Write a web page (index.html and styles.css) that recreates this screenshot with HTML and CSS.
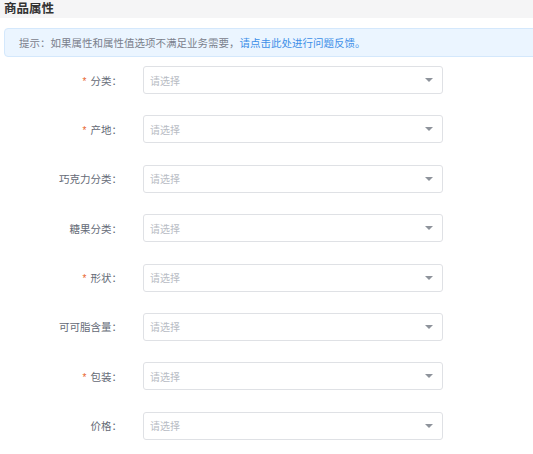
FILE: index.html
```html
<!DOCTYPE html>
<html lang="zh">
<head>
<meta charset="utf-8">
<link rel="stylesheet" href="styles.css">
</head>
<body>
<div class="page">
  <div class="title">商品属性</div>
  <div class="alert">提示：如果属性和属性值选项不满足业务需要，<a class="link">请点击此处进行问题反馈。</a></div>
  <div class="form">
    <div class="row"><label class="label"><span class="req">*</span>分类：</label><div class="select"><span class="ph">请选择</span><span class="arrow"></span></div></div>
    <div class="row"><label class="label"><span class="req">*</span>产地：</label><div class="select"><span class="ph">请选择</span><span class="arrow"></span></div></div>
    <div class="row"><label class="label">巧克力分类：</label><div class="select"><span class="ph">请选择</span><span class="arrow"></span></div></div>
    <div class="row"><label class="label">糖果分类：</label><div class="select"><span class="ph">请选择</span><span class="arrow"></span></div></div>
    <div class="row"><label class="label"><span class="req">*</span>形状：</label><div class="select"><span class="ph">请选择</span><span class="arrow"></span></div></div>
    <div class="row"><label class="label">可可脂含量：</label><div class="select"><span class="ph">请选择</span><span class="arrow"></span></div></div>
    <div class="row"><label class="label"><span class="req">*</span>包装：</label><div class="select"><span class="ph">请选择</span><span class="arrow"></span></div></div>
    <div class="row"><label class="label">价格：</label><div class="select"><span class="ph">请选择</span><span class="arrow"></span></div></div>
  </div>
</div>
</body>
</html>
```
FILE: styles.css
```css
html, body {
  margin: 0;
  padding: 0;
  background: #fff;
}
body {
  font-family: "Noto Sans CJK SC", "Noto Sans", sans-serif;
  color: #515a6e;
  overflow: hidden;
}
.page {
  width: 533px;
}
.title {
  background: #f5f5f6;
  height: 17px;
  padding-top: 1px;
  line-height: 14px;
  padding-left: 4px;
  font-size: 12.5px;
  font-weight: bold;
  color: #333;
}
.alert {
  margin: 10px -6px 0 4px;
  height: 27px;
  line-height: 27px;
  background: #ebf5ff;
  border: 1px solid #d4e8fc;
  border-radius: 4px;
  padding-left: 14px;
  font-size: 10.5px;
  color: #7a808c;
  white-space: nowrap;
}
.link {
  color: #3d8fe8;
}
.form {
  padding-top: 9px;
}
.row {
  display: flex;
  align-items: center;
  height: 28px;
  margin-bottom: 21.4px;
}
.label {
  width: 122px;
  text-align: right;
  font-size: 10.5px;
  color: #646a76;
  white-space: nowrap;
}
.req {
  color: #e8632b;
  margin-right: 4px;
  font-family: "Liberation Sans", sans-serif;
  font-size: 10px;
}
.select {
  margin-left: 21px;
  height: 26px;
  border: 1px solid #dfe1e5;
  border-radius: 3px;
  display: flex;
  align-items: center;
  justify-content: space-between;
  padding: 0 9px 0 6px;
  box-sizing: content-box;
  width: 283px;
}
.ph {
  font-size: 10px;
  color: #b8bcc4;
}
.arrow {
  width: 0;
  height: 0;
  border-left: 4px solid transparent;
  border-right: 4px solid transparent;
  border-top: 4px solid #8e939b;
}
```
